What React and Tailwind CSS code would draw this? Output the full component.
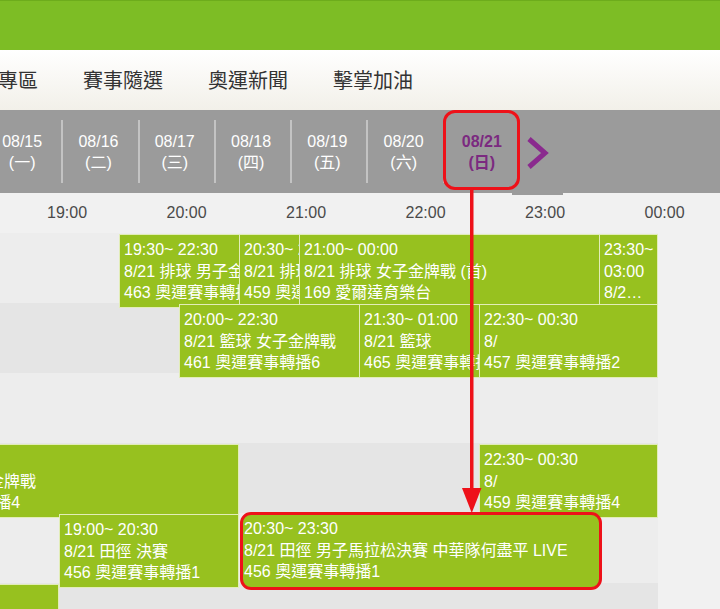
import React from 'react';

// hour -> x pixel on the timeline (19:00 sits at 59px, 120px per hour)
const hourX = (h) => 59 + (h - 19) * 120;
const GRID_W = 658;

const dates = [
  { d: '08/15', w: '(一)' },
  { d: '08/16', w: '(二)' },
  { d: '08/17', w: '(三)' },
  { d: '08/18', w: '(四)' },
  { d: '08/19', w: '(五)' },
  { d: '08/20', w: '(六)' },
];

const hours = ['19:00', '20:00', '21:00', '22:00', '23:00', '00:00'];

const events = [
  { row: 0, s: 19.5, e: 22.5, lines: ['19:30~ 22:30', '8/21 排球 男子金牌戰', '463 奧運賽事轉播3'] },
  { row: 0, s: 20.5, e: 22, lines: ['20:30~ 22:00', '8/21 排球 男子銅牌戰', '459 奧運賽事轉播4'] },
  { row: 0, s: 21, e: 24, lines: ['21:00~ 00:00', '8/21 排球 女子金牌戰 (首)', '169 愛爾達育樂台'] },
  { row: 0, s: 23.5, e: 25, lines: ['23:30~', '03:00', '8/2…'] },
  { row: 1, s: 20, e: 22.5, lines: ['20:00~ 22:30', '8/21 籃球 女子金牌戰', '461 奧運賽事轉播6'] },
  { row: 1, s: 21.5, e: 25, lines: ['21:30~ 01:00', '8/21 籃球', '465 奧運賽事轉播5'] },
  { row: 1, s: 22.5, e: 25, lines: ['22:30~ 00:30', '8/', '457 奧運賽事轉播2'] },
  { row: 3, s: 17.5, e: 20.5, lines: ['17:30~ 20:30', '8/21 手球 女子金牌戰', '459 奧運賽事轉播4'] },
  { row: 3, s: 22.5, e: 25, lines: ['22:30~ 00:30', '8/', '459 奧運賽事轉播4'] },
  { row: 4, s: 19, e: 20.5, lines: ['19:00~ 20:30', '8/21 田徑 決賽', '456 奧運賽事轉播1'] },
  { row: 5, s: 17, e: 19, lines: ['17:00~ 19:00', '8/21 田徑 預賽', '456 奧運賽事轉播1'] },
];

function EventBlock({ ev }) {
  const left = hourX(ev.s);
  const right = Math.min(hourX(ev.e), GRID_W);
  return (
    <div
      className="absolute h-[74px] bg-[#97c11f] border border-[#e2edb8] pl-[4px] pt-[4px] overflow-hidden text-white text-[16px] leading-[21.5px] whitespace-nowrap"
      style={{ left, width: right - left, top: ev.row * 70 + 1 }}
    >
      {ev.lines.map((t, i) => (
        <div key={i}>{t}</div>
      ))}
    </div>
  );
}

export default function App() {
  return (
    <div
      className="relative w-[720px] h-[609px] overflow-hidden bg-[#f1f1f1]"
      style={{ fontFamily: '"Liberation Sans", "Noto Sans CJK TC", sans-serif' }}
    >
      {/* top green bar */}
      <div className="h-[50px] bg-[#7dbd25] border-t border-[#6dac1c]" />

      {/* main nav */}
      <nav className="h-[60px] bg-gradient-to-b from-white to-[#f2f0e9] overflow-hidden">
        <div className="flex items-center h-full -ml-[42px] gap-[45px] text-[20px] text-[#333]" style={{ fontFamily: '"Noto Sans CJK TC", sans-serif' }}>
          <span>直播專區</span>
          <span>賽事隨選</span>
          <span>奧運新聞</span>
          <span>擊掌加油</span>
        </div>
      </nav>

      {/* date strip */}
      <div className="relative h-[83px] bg-[#9b9b9b]">
        <div className="flex items-center h-full -ml-[13px]">
          {dates.map((item) => (
            <React.Fragment key={item.d}>
              <div className="w-[74.3px] shrink-0 pr-[4px] flex flex-col items-center text-white text-[16px] leading-[21px]">
                <span>{item.d}</span>
                <span>{item.w}</span>
              </div>
              <div className="w-[2px] shrink-0 h-[63px] bg-[#c3c3c3]" />
            </React.Fragment>
          ))}
          <div className="w-[74px] shrink-0 flex flex-col items-center text-[#7b2a80] font-bold text-[16px] leading-[21px]">
            <span>08/21</span>
            <span>(日)</span>
          </div>
        </div>

        {/* next arrow */}
        <svg className="absolute left-[524px] top-[26px]" width="28" height="34" viewBox="0 0 28 34">
          <polyline points="5,3 21,17 5,31" fill="none" stroke="#8a2a8e" strokeWidth="5" strokeLinecap="butt" strokeLinejoin="miter" />
        </svg>

        {/* red callout round selected date */}
        <div className="absolute left-[443px] top-0 w-[77px] h-[80px] border-[3px] border-[#ee1119] rounded-[12px]" />
        <div className="absolute left-[512px] top-[83px] w-[51px] h-[2px] bg-[#9b9b9b]" />
      </div>

      {/* hour header */}
      <div className="h-[40px] flex items-center pl-[47px] text-[16px] text-[#4a4a4a]">
        {hours.map((h) => (
          <div key={h} className="w-[119.5px] shrink-0">{h}</div>
        ))}
      </div>

      {/* timeline grid */}
      <div className="relative w-[658px] h-[420px] overflow-hidden">
        <div className="h-[70px] bg-[#ededed]" />
        <div className="h-[70px] bg-[#e5e5e5]" />
        <div className="h-[70px] bg-[#ededed]" />
        <div className="h-[70px] bg-[#e5e5e5]" />
        <div className="h-[70px] bg-[#ededed]" />
        <div className="h-[70px] bg-[#e5e5e5]" />

        {events.map((ev, i) => (
          <EventBlock key={i} ev={ev} />
        ))}

        {/* highlighted live event */}
        <div className="absolute left-[240px] top-[279px] w-[362px] h-[78px] bg-[#97c11f] border-[3px] border-[#ee1119] rounded-[11px] pl-[1px] pt-[3px] overflow-hidden text-white text-[16px] leading-[21.5px] whitespace-nowrap">
          <div>20:30~ 23:30</div>
          <div>8/21 田徑 男子馬拉松決賽 中華隊何盡平 LIVE</div>
          <div>456 奧運賽事轉播1</div>
        </div>
      </div>

      {/* red pointer arrow */}
      <svg className="absolute left-[458px] top-[188px]" width="28" height="326" viewBox="0 0 28 326">
        <rect x="12" y="0" width="3.5" height="304" fill="#ee1119" />
        <polygon points="4,300 23.5,300 13.75,325" fill="#ee1119" />
      </svg>
    </div>
  );
}
